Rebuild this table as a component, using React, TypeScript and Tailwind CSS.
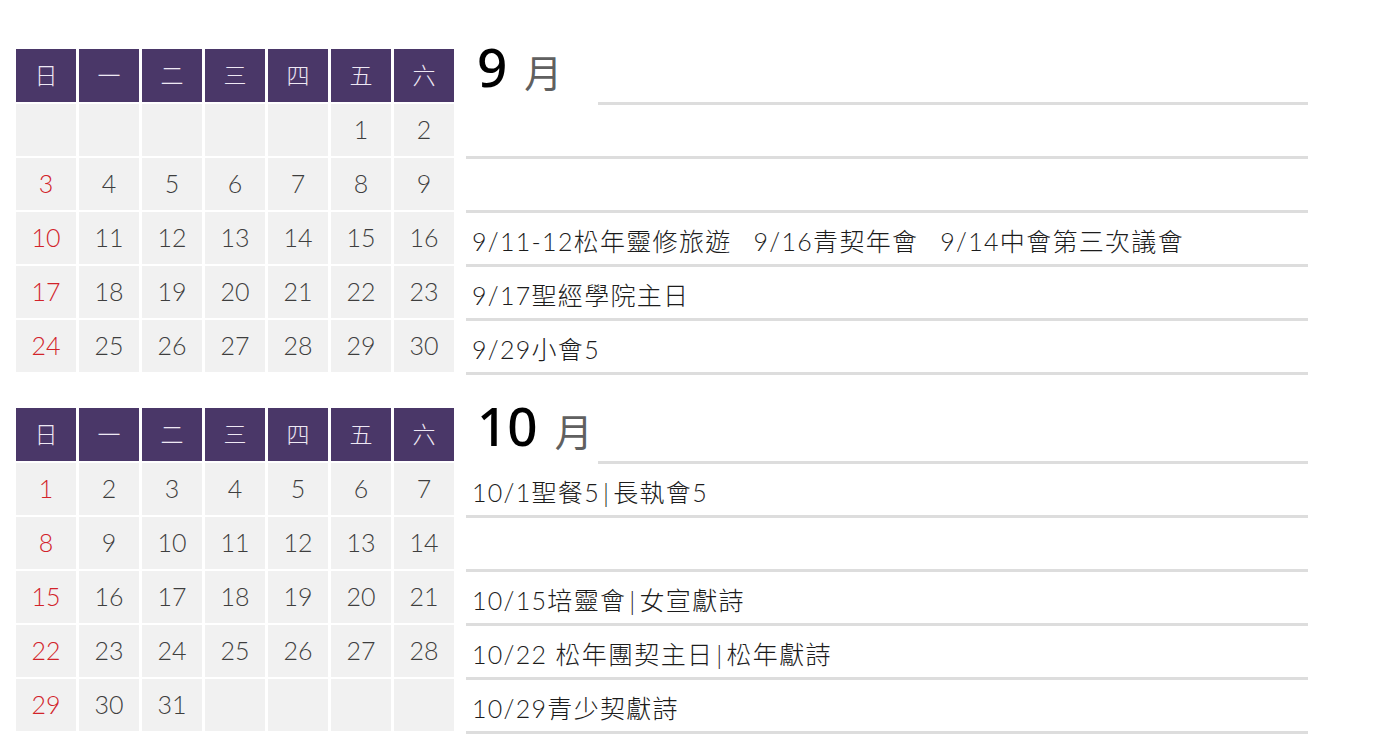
import React from "react";

const WEEK = ["日", "一", "二", "三", "四", "五", "六"];

function buildWeeks(startDay: number, days: number): (number | null)[][] {
  const cells: (number | null)[] = [];
  for (let i = 0; i < startDay; i++) cells.push(null);
  for (let d = 1; d <= days; d++) cells.push(d);
  while (cells.length % 7 !== 0) cells.push(null);
  const weeks: (number | null)[][] = [];
  for (let i = 0; i < cells.length; i += 7) weeks.push(cells.slice(i, i + 7));
  return weeks;
}

const FONT = { fontFamily: '"Lato", "Noto Sans CJK TC", sans-serif' };

function Calendar({ startDay, days }: { startDay: number; days: number }) {
  const weeks = buildWeeks(startDay, days);
  return (
    <div className="grid w-[438px] shrink-0 grid-cols-[repeat(7,60px)] gap-x-[3px] gap-y-[2px]">
      {WEEK.map((w) => (
        <div
          key={w}
          className="flex h-[53px] items-center justify-center bg-[#4a3768] text-[23px] font-light text-[#eee8f4]"
          style={FONT}
        >
          {w}
        </div>
      ))}
      {weeks.flat().map((n, i) => (
        <div
          key={i}
          className={`flex h-[52px] items-center justify-center bg-[#f1f1f1] text-[25px] font-light ${
            i % 7 === 0 ? "text-[#d2232a]" : "text-[#3e3e3e]"
          }`}
          style={FONT}
        >
          {n ?? ""}
        </div>
      ))}
    </div>
  );
}

function Seg({ text }: { text: string }) {
  const parts = text.split("|");
  return (
    <span>
      {parts.map((p, k) => (
        <React.Fragment key={k}>
          {k > 0 && <span className="px-[3px]">|</span>}
          {p}
        </React.Fragment>
      ))}
    </span>
  );
}

function Events({ month, items }: { month: string; items: string[][] }) {
  return (
    <div className="ml-[12px] flex w-[842px] shrink-0 flex-col">
      <div className="flex h-[53px] items-end pb-[9px] pl-[11px]">
        <div className="flex items-baseline gap-[17px] leading-none">
          <span
            className="text-[53px] font-medium leading-none text-black"
            style={{ fontFamily: '"Noto Sans", sans-serif' }}
          >
            {month}
          </span>
          <span
            className="text-[38px] leading-none text-[#606060]"
            style={{ fontFamily: '"Noto Sans CJK TC", sans-serif' }}
          >
            月
          </span>
        </div>
      </div>
      <div className="ml-[132px] h-[3px] bg-[#dddddd]" />
      {items.map((segs, i) => (
        <div
          key={i}
          className="flex h-[54px] items-center gap-[22px] border-b-[3px] border-[#dddddd] pl-[6px] pt-[6px] text-[25px] font-light tracking-[1.3px] whitespace-pre text-[#1c1c1c]"
          style={FONT}
        >
          {segs.map((s, j) => (
            <Seg key={j} text={s} />
          ))}
        </div>
      ))}
    </div>
  );
}

export default function App() {
  return (
    <div className="min-h-[738px] w-[1400px] bg-white pl-[16px] pt-[49px]">
      <div className="flex flex-col gap-[33px]">
        <div className="flex items-start">
          <Calendar startDay={5} days={30} />
          <Events
            month="9"
            items={[
              [],
              [],
              ["9/11-12松年靈修旅遊", "9/16青契年會", "9/14中會第三次議會"],
              ["9/17聖經學院主日"],
              ["9/29小會5"],
            ]}
          />
        </div>
        <div className="flex items-start">
          <Calendar startDay={0} days={31} />
          <Events
            month="10"
            items={[
              ["10/1聖餐5|長執會5"],
              [],
              ["10/15培靈會|女宣獻詩"],
              ["10/22 松年團契主日|松年獻詩"],
              ["10/29青少契獻詩"],
            ]}
          />
        </div>
      </div>
    </div>
  );
}
